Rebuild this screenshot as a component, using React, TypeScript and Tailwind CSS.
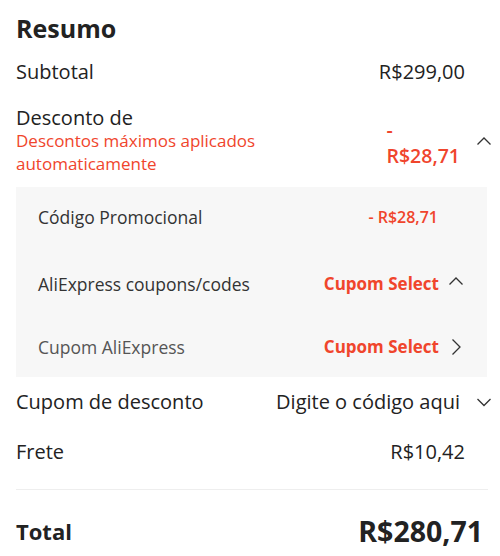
import React from "react";

const Up = ({ className = "" }: { className?: string }) => (
  <svg viewBox="0 0 16 16" className={className} fill="none" stroke="currentColor" strokeWidth="1.3">
    <path d="M1.5 11.5 L8 5 L14.5 11.5" />
  </svg>
);
const Down = ({ className = "" }: { className?: string }) => (
  <svg viewBox="0 0 16 16" className={className} fill="none" stroke="currentColor" strokeWidth="1.3">
    <path d="M1.5 5 L8 11.5 L14.5 5" />
  </svg>
);
const Right = ({ className = "" }: { className?: string }) => (
  <svg viewBox="0 0 16 16" className={className} fill="none" stroke="currentColor" strokeWidth="1.3">
    <path d="M4.5 0.5 L12 8 L4.5 15.5" />
  </svg>
);

export default function App() {
  return (
    <div className="w-[500px] h-[556px] bg-white overflow-hidden text-[#222] pl-4 pr-[7px]" style={{ fontFamily: '"Open Sans", sans-serif' }}>
      <div className="pt-[12px] text-[25px] font-bold leading-[32px]">Resumo</div>
      <div className="mt-[14px] flex justify-between items-center text-[20px] leading-[28px]">
        <span>Subtotal</span>
        <span className="mr-[28px]">R$299,00</span>
      </div>
      <div className="mt-[20px] flex justify-between">
        <div>
          <div className="text-[20px] leading-[24px]">Desconto de</div>
          <div className="text-[#f0452c] text-[17px] leading-[23px] w-[270px] -mt-[1px]">Descontos máximos aplicados automaticamente</div>
        </div>
        <div className="flex items-start">
          <div className="text-[#f0452c] font-semibold text-[19.5px] leading-[26px] mt-[11px]">
            <div>-</div>
            <div>R$28,71</div>
          </div>
          <Up className="w-[16px] h-[16px] ml-[16px] mr-[1px] mt-[27px] text-[#333]" />
        </div>
      </div>
      <div className="mt-[12px] mr-[6px] bg-[#f7f7f7] pl-[22px] pr-[23px] text-[17.5px]">
        <div className="h-[60px] flex justify-between items-center">
          <span className="text-[#333]">Código Promocional</span>
          <span className="text-[#f0452c] font-semibold text-[16px] mr-[26px]">- R$28,71</span>
        </div>
        <div className="h-[74px] flex justify-between items-center">
          <span className="text-[#333]">AliExpress coupons/codes</span>
          <span className="flex items-center">
            <span className="text-[#f0452c] font-bold text-[17px]">Cupom Select</span>
            <Up className="w-[16px] h-[16px] ml-[9px] -mt-[6px] text-[#333]" />
          </span>
        </div>
        <div className="h-[56px] flex justify-between items-center pb-[4px]">
          <span className="text-[#555]">Cupom AliExpress</span>
          <span className="flex items-center">
            <span className="text-[#f0452c] font-bold text-[17px]">Cupom Select</span>
            <Right className="w-[16px] h-[16px] ml-[9px] text-[#333]" />
          </span>
        </div>
      </div>
      <div className="mt-[11px] flex justify-between items-center text-[20px] leading-[28px]">
        <span>Cupom de desconto</span>
        <span className="flex items-center">
          <span>Digite o código aqui</span>
          <Down className="w-[16px] h-[16px] ml-[16px] mr-[1px] text-[#333]" />
        </span>
      </div>
      <div className="mt-[22px] flex justify-between items-center text-[20px] leading-[28px]">
        <span>Frete</span>
        <span className="mr-[28px]">R$10,42</span>
      </div>
      <div className="mt-[23px] border-t border-[#eee] mr-[5px]" />
      <div className="mt-[21px] flex justify-between items-center leading-[40px]">
        <span className="text-[22px] font-bold">Total</span>
        <span className="text-[28.5px] font-bold mr-[10px]">R$280,71</span>
      </div>
    </div>
  );
}
